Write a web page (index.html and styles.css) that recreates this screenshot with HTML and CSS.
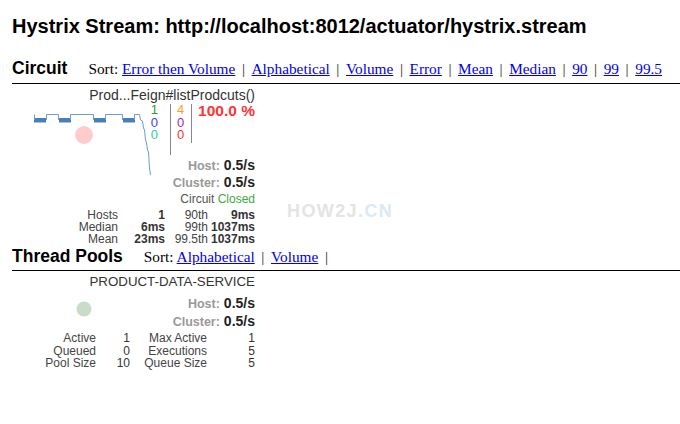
FILE: index.html
```html
<!DOCTYPE html>
<html>
<head>
<meta charset="utf-8">
<title>Hystrix Monitor</title>
<link rel="stylesheet" href="styles.css">
</head>
<body>
<h1 class="page-title">Hystrix Stream: http://localhost:8012/actuator/hystrix.stream</h1>

<section class="section section-circuit">
  <div class="menubar">
    <h2 class="menubar-title">Circuit</h2>
    <div class="menu-actions">Sort: <a href="#">Error then Volume</a><span class="sep">|</span><a href="#">Alphabetical</a><span class="sep">|</span><a href="#">Volume</a><span class="sep">|</span><a href="#">Error</a><span class="sep">|</span><a href="#">Mean</a><span class="sep">|</span><a href="#">Median</a><span class="sep">|</span><a href="#">90</a><span class="sep">|</span><a href="#">99</a><span class="sep">|</span><a href="#">99.5</a></div>
  </div>

  <div class="monitor monitor-circuit">
    <svg class="chart chart-circuit" width="243" height="157" viewBox="12 88 243 157">
      <circle cx="84" cy="135" r="9" fill="#ffcccc"/>
      <rect x="34" y="118" width="12" height="4.5" fill="#4a7fb8"/>
      <rect x="59" y="118" width="12" height="4.5" fill="#4a7fb8"/>
      <rect x="94" y="118" width="12" height="4.5" fill="#4a7fb8"/>
      <rect x="123" y="118" width="12" height="4.5" fill="#4a7fb8"/>
      <path d="M34.5 114.5 V120 M46.5 120 V114.5 H58.5 V120 M70.5 120 V114.5 H93.5 V120 M105.5 120 V114.5 H122.5 V120 M134.5 120 V114.5 H139.5 L140.5 120 L142.5 121 L143.5 128 L144.5 130 L145.5 140 L146.5 143 L147.5 150 L148.5 152 L149.5 168 L150.5 175" fill="none" stroke="#6d9ccd" stroke-width="1"/>
    </svg>
    <div class="monitor-name name-circuit">Prod...Feign#listProdcuts()</div>
    <div class="counters">
      <div class="counter-col col-a">
        <span class="c-success">1</span>
        <span class="c-short">0</span>
        <span class="c-bad">0</span>
      </div>
      <div class="counter-col col-b">
        <span class="c-timeout">4</span>
        <span class="c-rejected">0</span>
        <span class="c-failure">0</span>
      </div>
      <div class="error-pct">100.0 %</div>
    </div>
    <div class="rate rate-first"><span class="rate-label">Host:</span><span class="rate-value">0.5/s</span></div>
    <div class="rate"><span class="rate-label">Cluster:</span><span class="rate-value">0.5/s</span></div>
    <div class="circuit-status">Circuit <span class="closed">Closed</span></div>
    <div class="stats stats-circuit">
      <span>Hosts</span><span class="v">1</span><span>90th</span><span class="v">9ms</span>
      <span>Median</span><span class="v">6ms</span><span>99th</span><span class="v">1037ms</span>
      <span>Mean</span><span class="v">23ms</span><span>99.5th</span><span class="v">1037ms</span>
    </div>
  </div>
</section>

<section class="section section-thread">
  <div class="menubar">
    <h2 class="menubar-title">Thread Pools</h2>
    <div class="menu-actions">Sort: <a href="#">Alphabetical</a><span class="sep">|</span><a href="#">Volume</a><span class="sep">|</span></div>
  </div>

  <div class="monitor monitor-thread">
    <svg class="chart chart-thread" width="243" height="100" viewBox="12 275 243 100">
      <circle cx="84" cy="309" r="7.5" fill="#c9dcc9"/>
    </svg>
    <div class="monitor-name name-thread">PRODUCT-DATA-SERVICE</div>
    <div class="rate rate-first rate-tp"><span class="rate-label">Host:</span><span class="rate-value">0.5/s</span></div>
    <div class="rate rate-tp"><span class="rate-label">Cluster:</span><span class="rate-value">0.5/s</span></div>
    <div class="stats stats-thread">
      <span>Active</span><span class="n">1</span><span>Max Active</span><span class="n">1</span>
      <span>Queued</span><span class="n">0</span><span>Executions</span><span class="n">5</span>
      <span>Pool Size</span><span class="n">10</span><span>Queue Size</span><span class="n">5</span>
    </div>
  </div>
</section>

<div class="watermark">HOW2J<span class="wm-cn">.CN</span></div>
</body>
</html>
```

FILE: styles.css
```css
* {
  box-sizing: border-box;
}

html,
body {
  margin: 0;
  padding: 0;
  background: #ffffff;
}

body {
  width: 680px;
  padding-left: 12px;
  font-family: "Liberation Sans", Arial, sans-serif;
  color: #333;
}

.page-title {
  margin: 14px 0 0;
  font-size: 20px;
  line-height: 24px;
  font-weight: bold;
  color: #000;
}

.menubar {
  display: flex;
  align-items: baseline;
  padding-bottom: 5px;
  border-bottom: 1px solid #000;
}

.section-circuit .menubar {
  margin-top: 20px;
}

.section-thread .menubar {
  margin-top: 1px;
  padding-bottom: 4px;
}

.menubar-title {
  margin: 0;
  font-size: 17.5px;
  line-height: 20px;
  font-weight: bold;
  color: #000;
}

.menu-actions {
  margin-left: 21px;
  font-family: "Liberation Serif", "Times New Roman", serif;
  font-size: 15.3px;
  line-height: 17px;
  color: #000;
}

.menu-actions a {
  color: #0000ee;
  text-decoration: underline;
}

.sep {
  margin: 0 6.6px;
  color: #222;
}

.monitor {
  position: relative;
  width: 243px;
}

.monitor-circuit {
  margin-top: 4px;
}

.monitor-thread {
  margin-top: 4px;
}

.chart {
  position: absolute;
  top: 0;
  left: 0;
  overflow: visible;
}

.monitor-name {
  position: relative;
  text-align: right;
  line-height: 14px;
  color: #333;
  white-space: nowrap;
}

.name-circuit {
  font-size: 14px;
}

.name-thread {
  font-size: 13.3px;
}

.counters {
  position: relative;
  display: flex;
  justify-content: flex-end;
  align-items: flex-start;
  margin-top: 2px;
  font-size: 13px;
  line-height: 12.5px;
}

.counter-col {
  display: flex;
  flex-direction: column;
  align-items: flex-end;
  border-right: 1px solid #888;
}

.col-a {
  padding: 0 12px 13.5px 0;
}

.col-b {
  padding: 0 7px 1.5px 6px;
}

.c-success { color: #339933; }
.c-short { color: #4040ff; }
.c-bad { color: #33cc99; }
.c-timeout { color: #ff9f33; }
.c-rejected { color: #993399; }
.c-failure { color: #ff3333; }

.error-pct {
  margin-left: 6px;
  font-size: 15.5px;
  line-height: 14px;
  font-weight: bold;
  color: #ff3333;
}

.rate {
  position: relative;
  display: flex;
  justify-content: flex-end;
  align-items: baseline;
  height: 17px;
  line-height: 17px;
}

.rate-first {
  margin-top: 2px;
}

.rate-tp {
  height: 18px;
  line-height: 18px;
}

.monitor-thread .rate-first {
  margin-top: 5px;
}

.rate-label {
  font-size: 12.5px;
  font-weight: bold;
  color: #999;
}

.rate-value {
  margin-left: 4px;
  font-size: 14px;
  font-weight: bold;
  color: #222;
}

.circuit-status {
  position: relative;
  margin-top: 1px;
  text-align: right;
  font-size: 12px;
  line-height: 14px;
  color: #555;
}

.closed {
  color: #3fa83f;
}

.stats {
  position: relative;
  display: grid;
  justify-content: end;
  font-size: 12px;
  color: #444;
}

.stats > span {
  text-align: right;
  white-space: nowrap;
}

.stats .v {
  font-weight: bold;
  color: #333;
}

.stats-circuit {
  margin-top: 3px;
  grid-template-columns: 60px 47px 43px 47px;
  line-height: 12px;
}

.stats-thread {
  margin-top: 2px;
  grid-template-columns: 60px 34px 77px 48px;
  line-height: 12.5px;
}

.stats-thread .n {
  color: #333;
}

.watermark {
  position: absolute;
  left: 287px;
  top: 202px;
  font-size: 18px;
  line-height: 18px;
  font-weight: bold;
  letter-spacing: 1.4px;
  color: #e4e4e4;
}

.wm-cn {
  color: #dbe8f6;
}
```
